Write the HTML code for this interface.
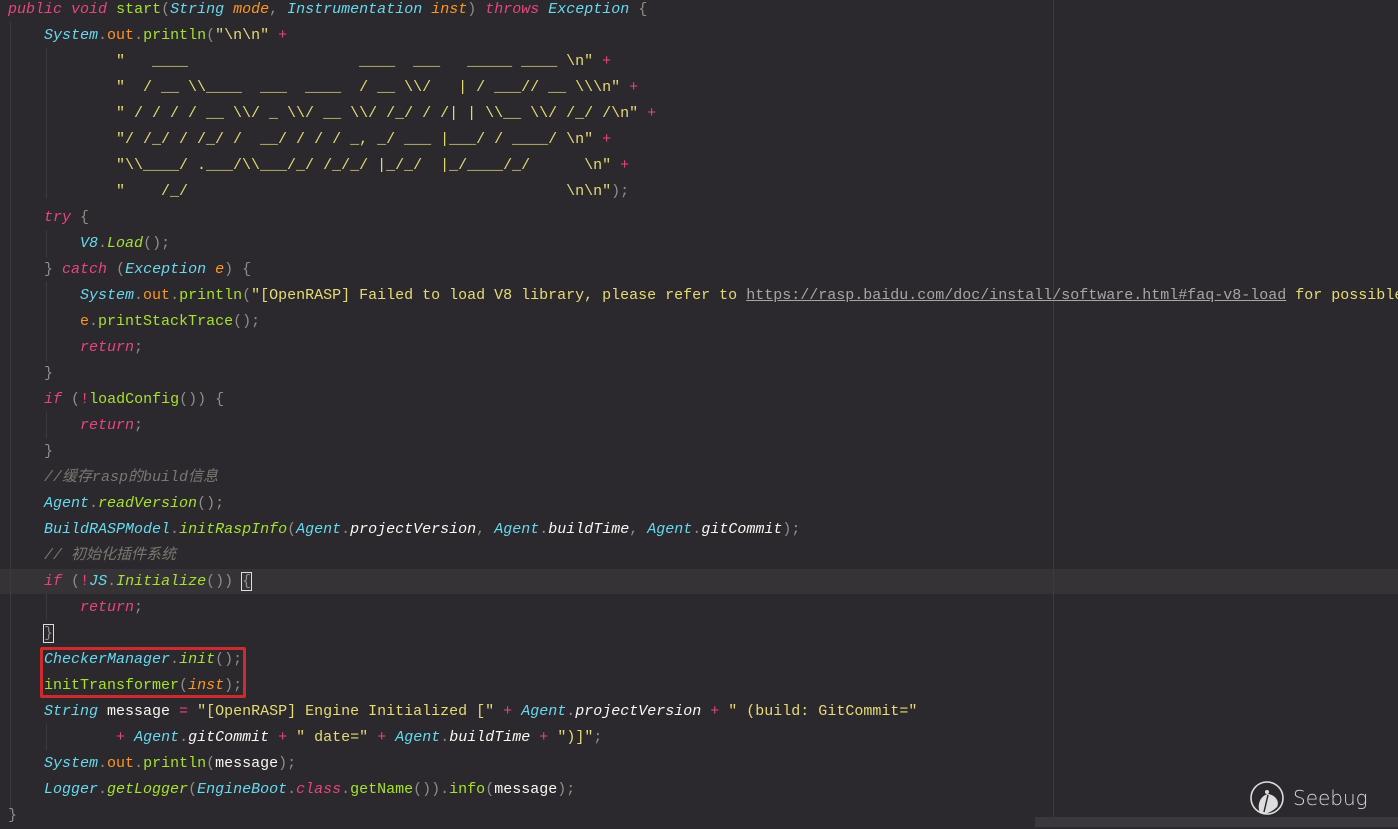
<!DOCTYPE html>
<html><head><meta charset="utf-8"><style>
body{margin:0;width:1398px;height:827px;background:#2b292d;overflow:hidden;position:relative;font-family:"Liberation Mono","Noto Sans CJK SC",monospace;font-size:15px;color:#f8f8f2}
.code{position:absolute;left:8px;top:-3px;width:1390px;overflow:hidden;white-space:pre;line-height:26px}
.k{color:#e8457c;font-style:italic}
.t{color:#66d9ef;font-style:italic}
.m{color:#a6e22e}
.mi{color:#a6e22e;font-style:italic}
.s{color:#e6db74}
.p{color:#fd971f;font-style:italic}
.f{color:#fd971f}
.c{color:#7b7770;font-style:italic}
.o{color:#e8457c}
.g{color:#8f8d88}
.u{color:#a8a6a0;text-decoration:underline}
.hl{position:absolute;left:0;top:569px;width:1398px;height:25px;background:#363337}
.vl{position:absolute;left:1053px;top:0;width:1px;height:817px;background:#3d3b40}
.bot{position:absolute;left:1035px;top:817px;width:363px;height:10px;background:#3a383c}
.gd{position:absolute;width:1px;background:#3c3a3e}
.box{position:absolute;left:40px;top:647px;width:200px;height:45px;border:3px solid #cf2a2e;border-radius:2px}
.cur{outline:1px solid #ddd}
</style></head><body>
<div class="hl"></div>
<div class="vl"></div>
<div class="bot"></div>
<div class="gd" style="left:10px;top:22px;height:790px"></div>
<div class="gd" style="left:46px;top:48px;height:150px"></div>
<div class="gd" style="left:46px;top:230px;height:28px"></div>
<div class="gd" style="left:46px;top:282px;height:80px"></div>
<div class="gd" style="left:46px;top:412px;height:26px"></div>
<div class="gd" style="left:46px;top:594px;height:26px"></div>
<div class="gd" style="left:46px;top:724px;height:26px"></div>
<div class="code"><span class="k">public</span> <span class="k">void</span> <span class="m">start</span><span class="g">(</span><span class="t">String</span> <span class="p">mode</span><span class="g">,</span> <span class="t">Instrumentation</span> <span class="p">inst</span><span class="g">)</span> <span class="k">throws</span> <span class="t">Exception</span> <span class="g">{</span>
    <span class="t">System</span><span class="g">.</span><span class="f">out</span><span class="g">.</span><span class="m">println</span><span class="g">(</span><span class="s">"\n\n"</span> <span class="o">+</span>
            <span class="s">"   ____                   ____  ___   _____ ____ \n"</span> <span class="o">+</span>
            <span class="s">"  / __ \\____  ___  ____  / __ \\/   | / ___// __ \\\n"</span> <span class="o">+</span>
            <span class="s">" / / / / __ \\/ _ \\/ __ \\/ /_/ / /| | \\__ \\/ /_/ /\n"</span> <span class="o">+</span>
            <span class="s">"/ /_/ / /_/ /  __/ / / / _, _/ ___ |___/ / ____/ \n"</span> <span class="o">+</span>
            <span class="s">"\\____/ .___/\\___/_/ /_/_/ |_/_/  |_/____/_/      \n"</span> <span class="o">+</span>
            <span class="s">"    /_/                                          \n\n"</span><span class="g">);</span>
    <span class="k">try</span> <span class="g">{</span>
        <span class="t">V8</span><span class="g">.</span><span class="mi">Load</span><span class="g">();</span>
    <span class="g">}</span> <span class="k">catch</span> <span class="g">(</span><span class="t">Exception</span> <span class="p">e</span><span class="g">)</span> <span class="g">{</span>
        <span class="t">System</span><span class="g">.</span><span class="f">out</span><span class="g">.</span><span class="m">println</span><span class="g">(</span><span class="s">"[OpenRASP] Failed to load V8 library, please refer to </span><span class="u">https://rasp.baidu.com/doc/install/software.html#faq-v8-load</span><span class="s"> for possible</span>
        <span class="f">e</span><span class="g">.</span><span class="m">printStackTrace</span><span class="g">();</span>
        <span class="k">return</span><span class="g">;</span>
    <span class="g">}</span>
    <span class="k">if</span> <span class="g">(</span><span class="o">!</span><span class="m">loadConfig</span><span class="g">())</span> <span class="g">{</span>
        <span class="k">return</span><span class="g">;</span>
    <span class="g">}</span>
    <span class="c">//缓存rasp的build信息</span>
    <span class="t">Agent</span><span class="g">.</span><span class="mi">readVersion</span><span class="g">();</span>
    <span class="t">BuildRASPModel</span><span class="g">.</span><span class="mi">initRaspInfo</span><span class="g">(</span><span class="t">Agent</span><span class="g">.</span><span style="font-style:italic">projectVersion</span><span class="g">,</span> <span class="t">Agent</span><span class="g">.</span><span style="font-style:italic">buildTime</span><span class="g">,</span> <span class="t">Agent</span><span class="g">.</span><span style="font-style:italic">gitCommit</span><span class="g">);</span>
    <span class="c">// 初始化插件系统</span>
    <span class="k">if</span> <span class="g">(</span><span class="o">!</span><span class="t">JS</span><span class="g">.</span><span class="mi">Initialize</span><span class="g">())</span> <span class="g cur">{</span>
        <span class="k">return</span><span class="g">;</span>
    <span class="g cur">}</span>
    <span class="t">CheckerManager</span><span class="g">.</span><span class="mi">init</span><span class="g">();</span>
    <span class="m">initTransformer</span><span class="g">(</span><span class="p">inst</span><span class="g">);</span>
    <span class="t">String</span> message <span class="o">=</span> <span class="s">"[OpenRASP] Engine Initialized ["</span> <span class="o">+</span> <span class="t">Agent</span><span class="g">.</span><span style="font-style:italic">projectVersion</span> <span class="o">+</span> <span class="s">" (build: GitCommit="</span>
            <span class="o">+</span> <span class="t">Agent</span><span class="g">.</span><span style="font-style:italic">gitCommit</span> <span class="o">+</span> <span class="s">" date="</span> <span class="o">+</span> <span class="t">Agent</span><span class="g">.</span><span style="font-style:italic">buildTime</span> <span class="o">+</span> <span class="s">")]"</span><span class="g">;</span>
    <span class="t">System</span><span class="g">.</span><span class="f">out</span><span class="g">.</span><span class="m">println</span><span class="g">(</span>message<span class="g">);</span>
    <span class="t">Logger</span><span class="g">.</span><span class="mi">getLogger</span><span class="g">(</span><span class="t">EngineBoot</span><span class="g">.</span><span class="k">class</span><span class="g">.</span><span class="m">getName</span><span class="g">()).</span><span class="m">info</span><span class="g">(</span>message<span class="g">);</span>
<span class="g">}</span></div>
<div class="box"></div>
<svg style="position:absolute;left:1250px;top:779px" width="36" height="40" viewBox="0 0 36 40">
<circle cx="17" cy="19" r="16" fill="none" stroke="#ddd" stroke-width="1.6"/>
<path d="M10 34 C6 24 12 16 18 15 C25 16 30 22 27 28 C22 33 15 36 10 34 Z" fill="#ddd"/>
<path d="M18 16 L14 33" stroke="#2b292d" stroke-width="1.5"/>
<circle cx="17" cy="13" r="2" fill="#ddd"/>
</svg>
<div style="position:absolute;left:1293px;top:786px;font-family:'DejaVu Sans',sans-serif;font-size:20px;font-weight:300;color:#d8d8d8">Seebug</div>
</body></html>
